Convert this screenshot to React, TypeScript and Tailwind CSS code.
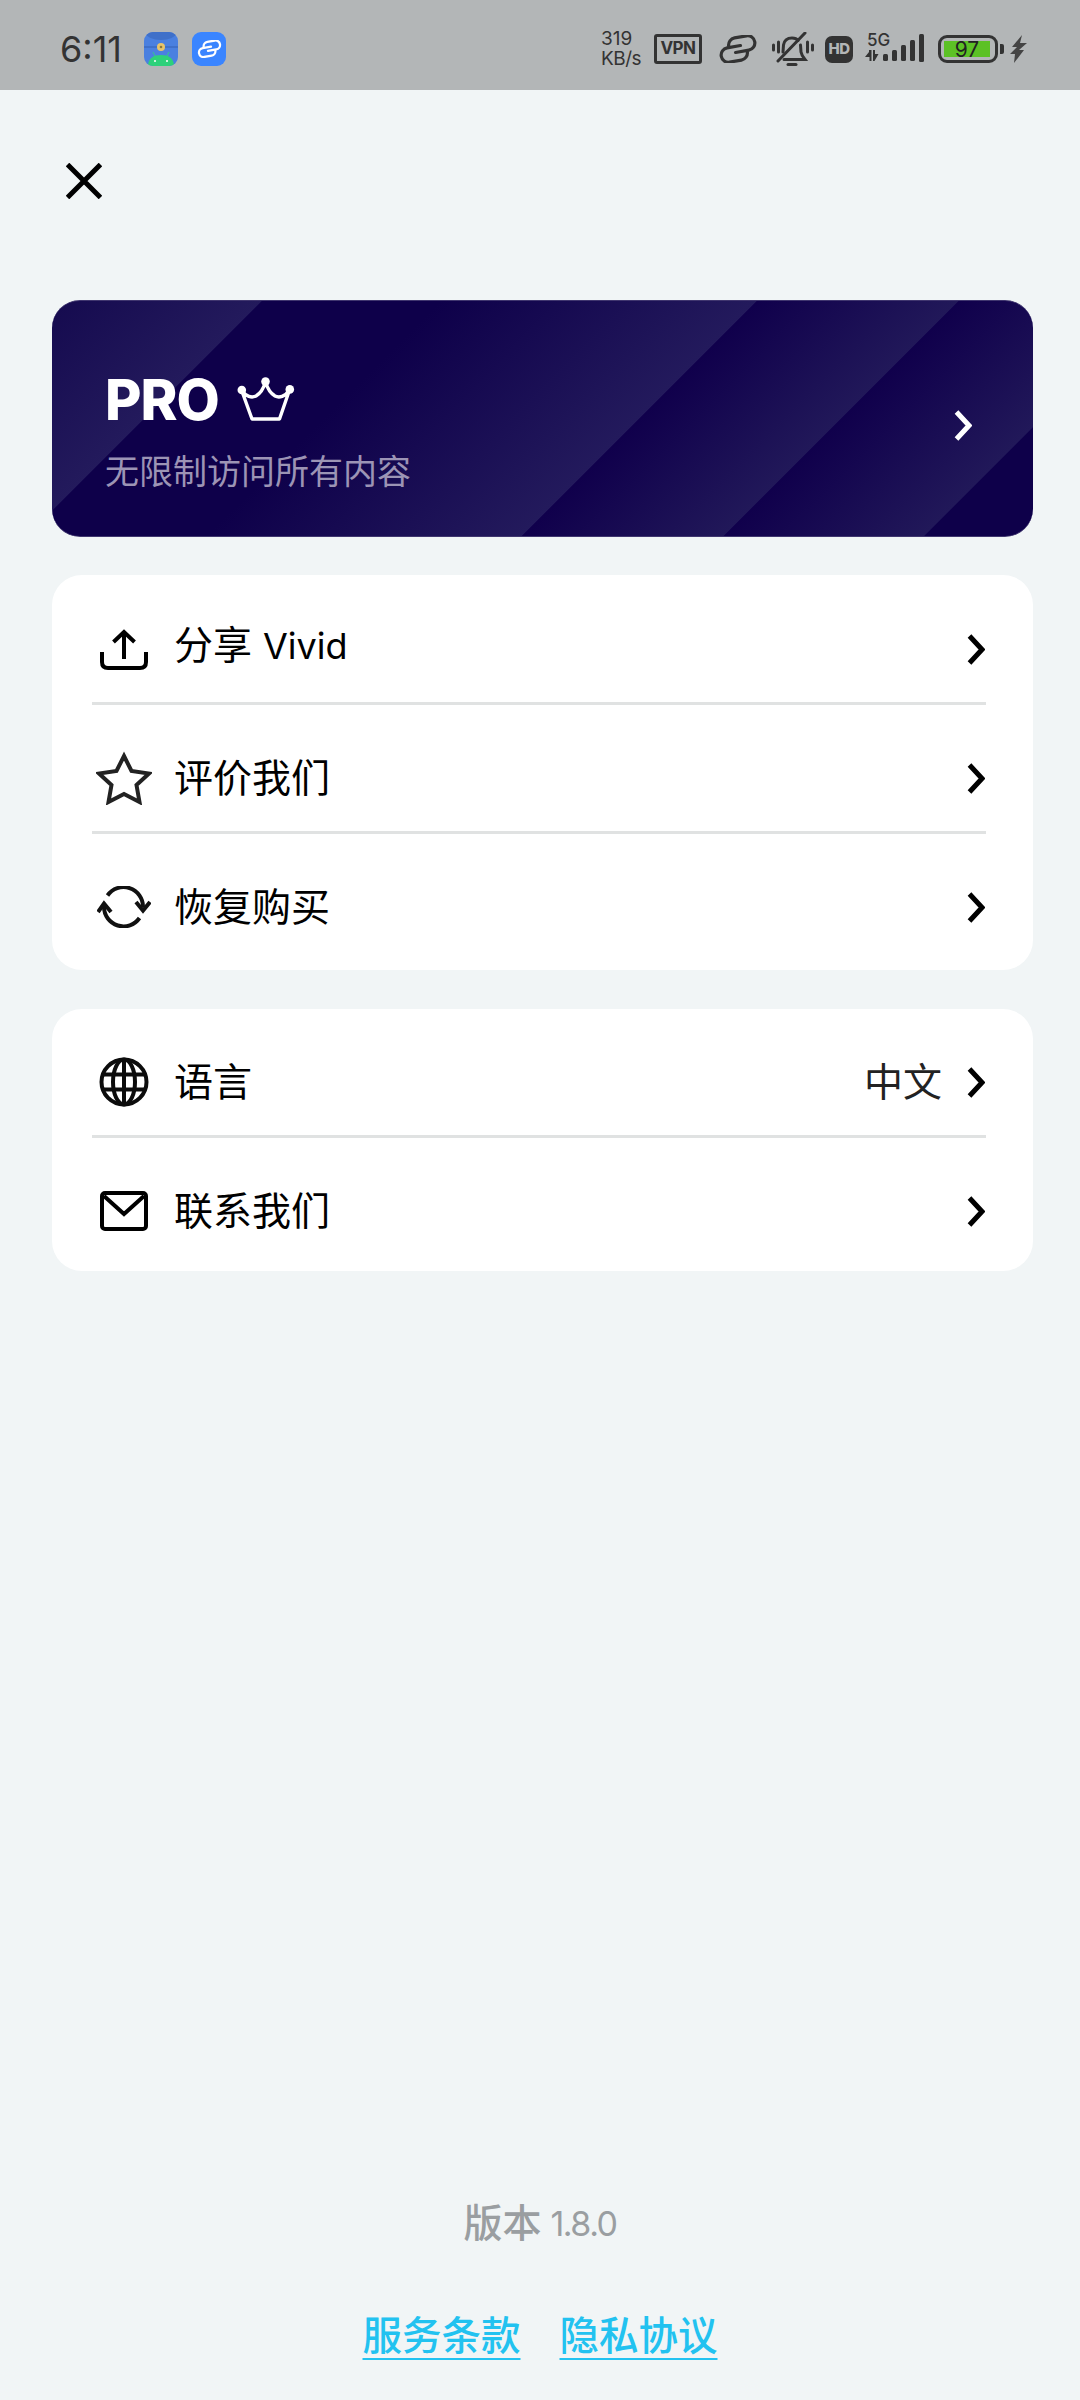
import React from 'react';

const Chevron = ({ className = 'text-black' }: { className?: string }) => (
  <svg width="18" height="31" viewBox="0 0 18 31" fill="none" className={`shrink-0 ${className}`}>
    <path d="M2.5 2 L15 15.5 L2.5 29" stroke="currentColor" strokeWidth="5" />
  </svg>
);

const LinkGlyph = ({ size = 40, color = '#333', stroke = 3.2 }: { size?: number; color?: string; stroke?: number }) => (
  <svg width={size} height={(size * 28) / 40} viewBox="0 0 40 28" fill="none" stroke={color} strokeWidth={stroke} strokeLinecap="round">
    <g transform="rotate(-10 20 14)">
      <path d="M23 11 L9.5 11 A7.25 7.25 0 0 0 9.5 25.5 L21.5 25.5 A7.25 7.25 0 0 0 28.7 18.5" />
      <path d="M17 17 L30.5 17 A7.25 7.25 0 0 0 30.5 2.5 L18.5 2.5 A7.25 7.25 0 0 0 11.3 9.5" />
    </g>
  </svg>
);

const AndroidApp = () => (
  <svg width="34" height="34" viewBox="0 0 34 34" className="rounded-[9px]">
    <rect width="34" height="34" fill="#4a80e0" />
    <ellipse cx="17" cy="1" rx="15" ry="7" fill="#3f70c9" />
    <rect y="14" width="34" height="2" fill="#3f70c9" />
    <circle cx="17" cy="15" r="4" fill="#e8c46a" />
    <circle cx="17" cy="15" r="1.3" fill="#8a7a40" />
    <path d="M9 20 L11.5 25 M25 20 L22.5 25" stroke="#34c98a" strokeWidth="1" />
    <path d="M4 34 C4 26 10 23 17 23 C24 23 30 26 30 34 Z" fill="#2ed17a" />
    <circle cx="11" cy="29" r="1" fill="#fff" />
    <circle cx="23" cy="29" r="1" fill="#fff" />
  </svg>
);

const MutedBell = () => (
  <svg width="42" height="34" viewBox="0 0 42 34" fill="none" stroke="#333" strokeWidth="3" strokeLinecap="round">
    <path d="M11 20 L11.5 13 C12 9 15 6 20 6 C23 6 25 7 26 8.5" />
    <path d="M28.5 13 L29 20 C29.5 23 31 25 33 27.5 L12 27.5" />
    <path d="M33 1 L6 29" />
    <path d="M16 32.5 L24 32.5" />
    <path d="M1.5 13 L1.5 18 M6.5 10 L6.5 20 M35.5 10 L35.5 20 M40.5 13 L40.5 18" />
  </svg>
);

const Signal = () => (
  <svg width="60" height="30" viewBox="0 0 60 30" fill="#333">
    <path d="M0 23 L4 18 L4 16 L6.5 16 L6.5 27 L4.5 27 L4.5 23 Z M8 16 L10 16 L10 20 L13.5 20 L9.5 27 L8 27 Z" />
    <rect x="18" y="20" width="5" height="7" rx="1.5" />
    <rect x="27" y="16" width="5" height="11" rx="1.5" />
    <rect x="36" y="11" width="5" height="16" rx="1.5" />
    <rect x="45" y="6" width="5" height="21" rx="1.5" />
    <rect x="54" y="0" width="5" height="28" rx="1.5" />
  </svg>
);

const StatusBar = () => (
  <div className="h-[90px] shrink-0 bg-[#b3b6b7] pt-[8px] pl-[60px] pr-[53px] flex items-center text-[#333]">
    <span className="w-[66px] text-[36px] leading-none font-['Inter','Noto_Sans',sans-serif]">6:11</span>
    <div className="ml-[18px]">
      <AndroidApp />
    </div>
    <div className="ml-[14px] w-[34px] h-[34px] rounded-[9px] bg-[#3a85ff] flex items-center justify-center">
      <LinkGlyph size={25} color="#fff" stroke={3.6} />
    </div>
    <div className="ml-auto w-[41px] flex flex-col text-[19px] leading-[20px] font-['Inter',sans-serif]">
      <span>319</span>
      <span className="whitespace-nowrap tracking-[-0.5px]">KB/s</span>
    </div>
    <div className="ml-[12px] w-[48px] h-[30px] border-[3px] border-[#333] rounded-[3px] flex items-center justify-center text-[17px] font-bold font-['Inter',sans-serif] tracking-[-0.5px]">
      VPN
    </div>
    <div className="ml-[16px]">
      <LinkGlyph />
    </div>
    <div className="ml-[14px]">
      <MutedBell />
    </div>
    <div className="ml-[11px] w-[28px] h-[27px] bg-[#333] rounded-[7px] flex items-center justify-center text-[#b3b6b7] text-[15px] font-extrabold font-['Inter',sans-serif] tracking-[-0.5px]">
      HD
    </div>
    <div className="ml-[12px] w-[60px] h-[30px] relative">
      <Signal />
      <span className="absolute left-[2px] top-[-2px] text-[17px] leading-[17px] font-medium font-['Inter',sans-serif]">5G</span>
    </div>
    <div className="ml-[13px] w-[60px] h-[28px] border-[3px] border-[#333] rounded-[9px] p-[3px] flex">
      <div className="w-[46px] h-full bg-[#5cc125] flex items-center justify-center text-[21px] leading-none text-[#222] font-['Inter',sans-serif]">
        97
      </div>
    </div>
    <div className="ml-[2px] w-[4px] h-[10px] bg-[#333] rounded-r-[2px]" />
    <svg width="17" height="28" viewBox="0 0 17 28" className="ml-[6px]" fill="#444">
      <path d="M12 0 L2 12 L7 12 L0 19 L5 19 L4 28 L14 15 L9 15 L17 8 L10 8 Z" />
    </svg>
  </div>
);

const ShareIcon = () => (
  <svg width="48" height="42" viewBox="0 0 48 42" fill="none" stroke="#000" strokeWidth="4">
    <path d="M2 23 L2 33 C2 37 4 39 8 39 L40 39 C44 39 46 37 46 33 L46 23" />
    <path d="M24 30 L24 4" />
    <path d="M13.5 13 L24 3 L34.5 13" />
  </svg>
);

const StarIcon = () => (
  <svg width="56" height="54" viewBox="0 0 56 54" fill="none" stroke="#222" strokeWidth="4" strokeLinejoin="miter">
    <path d="M28 5 L35.5 20 L53 22.5 L40.5 34 L43.5 51 L28 43 L12.5 51 L15.5 34 L3 22.5 L20.5 20 Z" />
  </svg>
);

const SyncIcon = () => (
  <svg width="54" height="42" viewBox="0 0 54 42" fill="none" stroke="#111" strokeWidth="4">
    <path d="M10.5 9.5 A19.5 19.5 0 0 1 46 21" />
    <path d="M42.5 32 A19.5 19.5 0 0 1 7 21" />
    <path d="M39 16 L46 24.5 L53 16" />
    <path d="M1 26 L7 17.5 L14 26" />
  </svg>
);

const GlobeIcon = () => (
  <svg width="50" height="50" viewBox="0 0 50 50" fill="none" stroke="#0c0c0c" strokeWidth="4">
    <circle cx="25" cy="25" r="22.5" />
    <ellipse cx="25" cy="25" rx="11" ry="22.5" />
    <path d="M25 2.5 L25 47.5 M5 17.5 L45 17.5 M5 32.5 L45 32.5" />
  </svg>
);

const MailIcon = () => (
  <svg width="48" height="40" viewBox="0 0 48 40" fill="none" stroke="#000" strokeWidth="4">
    <rect x="2" y="2" width="44" height="36" rx="3" />
    <path d="M4 5 L24 23 L44 5" />
  </svg>
);

interface RowProps {
  icon: React.ReactNode;
  label: React.ReactNode;
  value?: string;
  className: string;
  labelClass?: string;
}

const Row = ({ icon, label, value, className, labelClass = '' }: RowProps) => (
  <div className={`flex items-center pl-[44px] pr-[48px] ${className}`}>
    <div className="w-[56px] h-[52px] flex items-center justify-center shrink-0">{icon}</div>
    <span className={`ml-[22px] text-[39px] leading-[52px] text-black ${labelClass}`}>{label}</span>
    {value && <span className="ml-auto mr-[25px] text-[39px] leading-[52px] text-[#222]">{value}</span>}
    <div className={value ? '' : 'ml-auto'}>
      <Chevron />
    </div>
  </div>
);

const Divider = () => <div className="ml-[40px] mr-[47px] h-[3px] bg-[#e0e2e2]" />;

const ProCard = () => (
  <div className="w-[981px] h-[237px] rounded-[28px] border-y border-[#40366f] pt-[69px] pl-[53px] pr-[61px] flex justify-between bg-[linear-gradient(135deg,#150a4f_0%,#231a5c_17.2%,#0e004a_17.3%,#0e004a_32%,#231a5c_57.9%,#10004c_58%,#211859_74.5%,#10004c_74.6%,#211859_91%,#0e004a_91.1%,#0e004a_100%)]">
    <div className="flex flex-col">
      <div className="flex items-center h-[60px]">
        <span className="text-[56px] leading-[60px] font-extrabold text-white tracking-[-1px] font-['Inter',sans-serif]">PRO</span>
        <svg width="58" height="46" viewBox="0 0 58 46" fill="none" className="ml-[18px]">
          <path d="M15 42 L42.5 42 L52.5 13 C48 20 42 21 38 19 C33 16 30 10 28.5 5 C27 10 24 16 19 19 C15 21 9 20 4.5 13 Z" stroke="#fff" strokeWidth="3.4" strokeLinejoin="round" />
          <circle cx="4.8" cy="13" r="4.3" fill="#fff" />
          <circle cx="28.5" cy="4.6" r="4.3" fill="#fff" />
          <circle cx="52.8" cy="12.4" r="4.3" fill="#fff" />
        </svg>
      </div>
      <span className="mt-[20px] text-[34px] leading-[44px] text-[#9c94b5]">无限制访问所有内容</span>
    </div>
    <div className="mt-[40px]">
      <Chevron className="text-white" />
    </div>
  </div>
);

export default function App() {
  return (
    <div className="w-[1080px] h-[2400px] flex flex-col bg-[#f1f5f6] font-['Inter','Noto_Sans_CJK_SC',sans-serif]">
      <StatusBar />

      <div className="flex-1 flex flex-col pl-[52px]">
        <div className="pt-[73px] pl-[14px] h-[210px]">
          <svg width="36" height="36" viewBox="0 0 36 36" fill="none" stroke="#000" strokeWidth="5">
            <path d="M1.5 1.5 L34.5 34.5 M34.5 1.5 L1.5 34.5" />
          </svg>
        </div>

        <ProCard />

        <div className="mt-[38px] w-[981px] bg-white rounded-[30px]">
          <Row
            className="pt-[48px] pb-[26px]"
            icon={<ShareIcon />}
            labelClass="-translate-y-[4px]"
            label={
              <>
                分享 <span className="text-[36px]">Vivid</span>
              </>
            }
          />
          <Divider />
          <Row className="pt-[47px] pb-[27px]" icon={<StarIcon />} label="评价我们" />
          <Divider />
          <Row className="pt-[47px] pb-[37px]" icon={<SyncIcon />} label="恢复购买" />
        </div>

        <div className="mt-[39px] w-[981px] bg-white rounded-[30px]">
          <Row className="pt-[47px] pb-[27px]" icon={<GlobeIcon />} label="语言" value="中文" />
          <Divider />
          <Row className="pt-[47px] pb-[34px]" icon={<MailIcon />} label="联系我们" />
        </div>
      </div>

      <div className="flex flex-col items-center pb-[35px]">
        <div className="h-[56px] flex items-center text-[#9a9ea1]">
          <span className="text-[39px] font-medium">版本</span>
          <span className="ml-[9px] text-[34px] tracking-[-1.5px]">1.8.0</span>
        </div>
        <div className="mt-[58px] h-[56px] flex items-center gap-[39px] text-[39.5px] font-medium text-[#22c2f0] underline decoration-2 underline-offset-[8px]">
          <span>服务条款</span>
          <span>隐私协议</span>
        </div>
      </div>
    </div>
  );
}
